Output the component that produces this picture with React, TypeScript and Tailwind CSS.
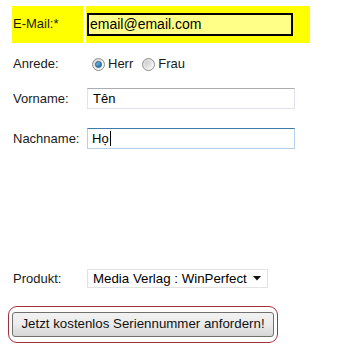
const font = { fontFamily: '"Liberation Sans", Arial, sans-serif' };

const Radio = ({ checked }: { checked?: boolean }) => (
  <span className="flex h-[13px] w-[13px] items-center justify-center rounded-full border border-[#8e8f8f] bg-gradient-to-br from-[#d4d4d4] to-[#fdfdfd]">
    {checked ? (
      <span className="h-[7px] w-[7px] rounded-full border border-[#1e5a85] bg-gradient-to-br from-[#7dc5ef] to-[#1a6aa0]" />
    ) : (
      <span className="h-[7px] w-[7px] rounded-full bg-gradient-to-br from-[#c9c9c9] to-[#f4f4f4]" />
    )}
  </span>
);

export default function App() {
  return (
    <div className="h-[351px] w-[346px] bg-white text-[13px] text-[#1a1a1a]" style={font}>
      <div className="flex flex-col pl-[12px] pt-[6px]">
        {/* E-Mail */}
        <div className="flex h-[37px]">
          <div className="flex w-[71px] items-center bg-[#ffff00] pl-[1px] pb-[1px]">E-Mail:*</div>
          <div className="ml-[3px] flex w-[224px] items-center bg-[#ffff00] pl-[1px]">
            <div className="flex h-[23px] w-[206px] items-center border-2 border-black bg-[#ffff88] pl-[1px] text-[14px] text-black">
              email@email.com
            </div>
          </div>
        </div>

        {/* Anrede */}
        <div className="mt-[8px] flex h-[26px] items-center">
          <div className="w-[75px] pl-[1px] pb-[1px]">Anrede:</div>
          <div className="ml-[5px] flex items-center">
            <Radio checked />
            <span className="ml-[3px]">Herr</span>
            <span className="ml-[9px]">
              <Radio />
            </span>
            <span className="ml-[3px]">Frau</span>
          </div>
        </div>

        {/* Vorname */}
        <div className="mt-[11px] flex h-[21px] items-center">
          <div className="w-[75px] pl-[1px]">Vorname:</div>
          <div className="flex h-[21px] w-[208px] items-center border border-[#e2e3ea] border-t-[#abadb3] bg-white pl-[5px] text-black">
            Tên
          </div>
        </div>

        {/* Nachname */}
        <div className="mt-[19px] flex h-[21px] items-center">
          <div className="w-[75px] pl-[1px]">Nachname:</div>
          <div className="flex h-[21px] w-[208px] items-center border border-[#b5cfe7] border-t-[#3d7bad] bg-white pl-[4px] text-black">
            Họ
            <span className="ml-[1px] h-[15px] w-px bg-black" />
          </div>
        </div>

        {/* Produkt */}
        <div className="mt-[120px] flex h-[19px] items-center">
          <div className="w-[75px] pl-[1px]">Produkt:</div>
          <div className="flex h-[19px] w-[181px] items-center border border-[#e3e3e3] bg-white pl-[5px] pr-[6px] text-[13.3px] text-black">
            <span>Media Verlag : WinPerfect</span>
            <svg className="ml-auto" width="8" height="5" viewBox="0 0 8 5">
              <path d="M0 0 H8 L4 4.5 Z" fill="#111" />
            </svg>
          </div>
        </div>

        {/* Button */}
        <div className="-ml-[4px] mt-[18px] flex h-[37px] w-[270px] items-center justify-center rounded-[9px] border border-[#a3303c]">
          <button
            type="button"
            className="flex h-[25px] w-[262px] items-center justify-center rounded-[3px] border border-[#707070] bg-gradient-to-b from-[#f2f2f2] via-[#ebebeb] to-[#d6d6d6] pb-[1px] text-[13.3px] text-[#111]"
            style={font}
          >
            Jetzt kostenlos Seriennummer anfordern!
          </button>
        </div>
      </div>
    </div>
  );
}
